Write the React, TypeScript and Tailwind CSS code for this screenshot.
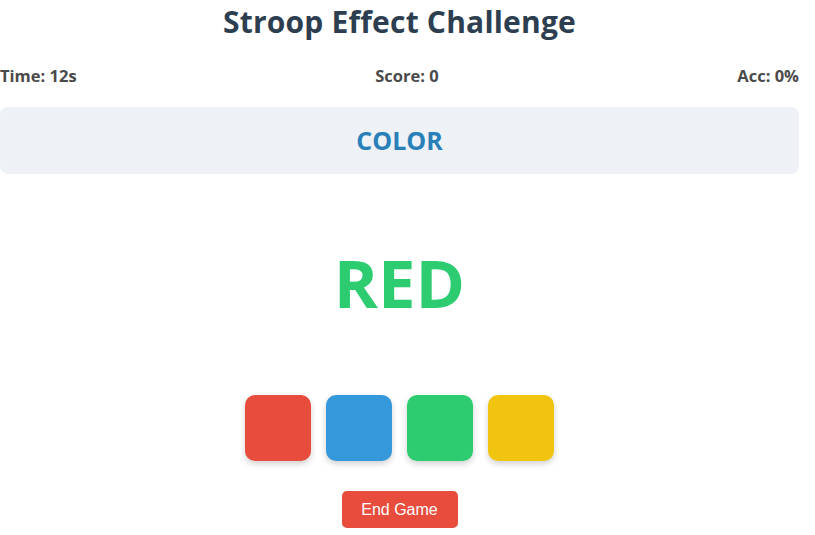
export default function App() {
  const colors = ["bg-[#e74c3c]", "bg-[#3498db]", "bg-[#2ecc71]", "bg-[#f1c40f]"];
  return (
    <div className="w-[799px] bg-white font-['Open_Sans',sans-serif]">
      <h1 className="pt-[2px] text-center text-[30px] font-bold leading-[40px] text-[#2c3e50] tracking-[0.2px]">
        Stroop Effect Challenge
      </h1>
      <div className="mt-[22px] flex justify-between text-[16.5px] font-bold leading-[24px] text-[#4a4a4a]">
        <span>Time: 12s</span>
        <span>Score: 0</span>
        <span>Acc: 0%</span>
      </div>
      <div className="mt-[19px] flex h-[67px] items-center justify-center rounded-lg bg-[#eef1f6]">
        <span className="text-[25px] font-bold text-[#2980b9]">COLOR</span>
      </div>
      <div className="mt-[68px] flex h-[80px] items-center justify-center">
        <span className="text-[67px] font-bold leading-none text-[#2ecc71]">RED</span>
      </div>
      <div className="mt-[73px] flex justify-center gap-[15px]">
        {colors.map((c) => (
          <button
            key={c}
            className={`h-[66px] w-[66px] rounded-[10px] ${c} shadow-[0_3px_6px_rgba(0,0,0,0.18)]`}
          />
        ))}
      </div>
      <div className="mt-[30px] flex justify-center">
        <button className="h-[37px] w-[116px] rounded-[5px] bg-[#e74c3c] font-['Liberation_Sans',sans-serif] text-[16px] text-white">
          End Game
        </button>
      </div>
    </div>
  );
}
